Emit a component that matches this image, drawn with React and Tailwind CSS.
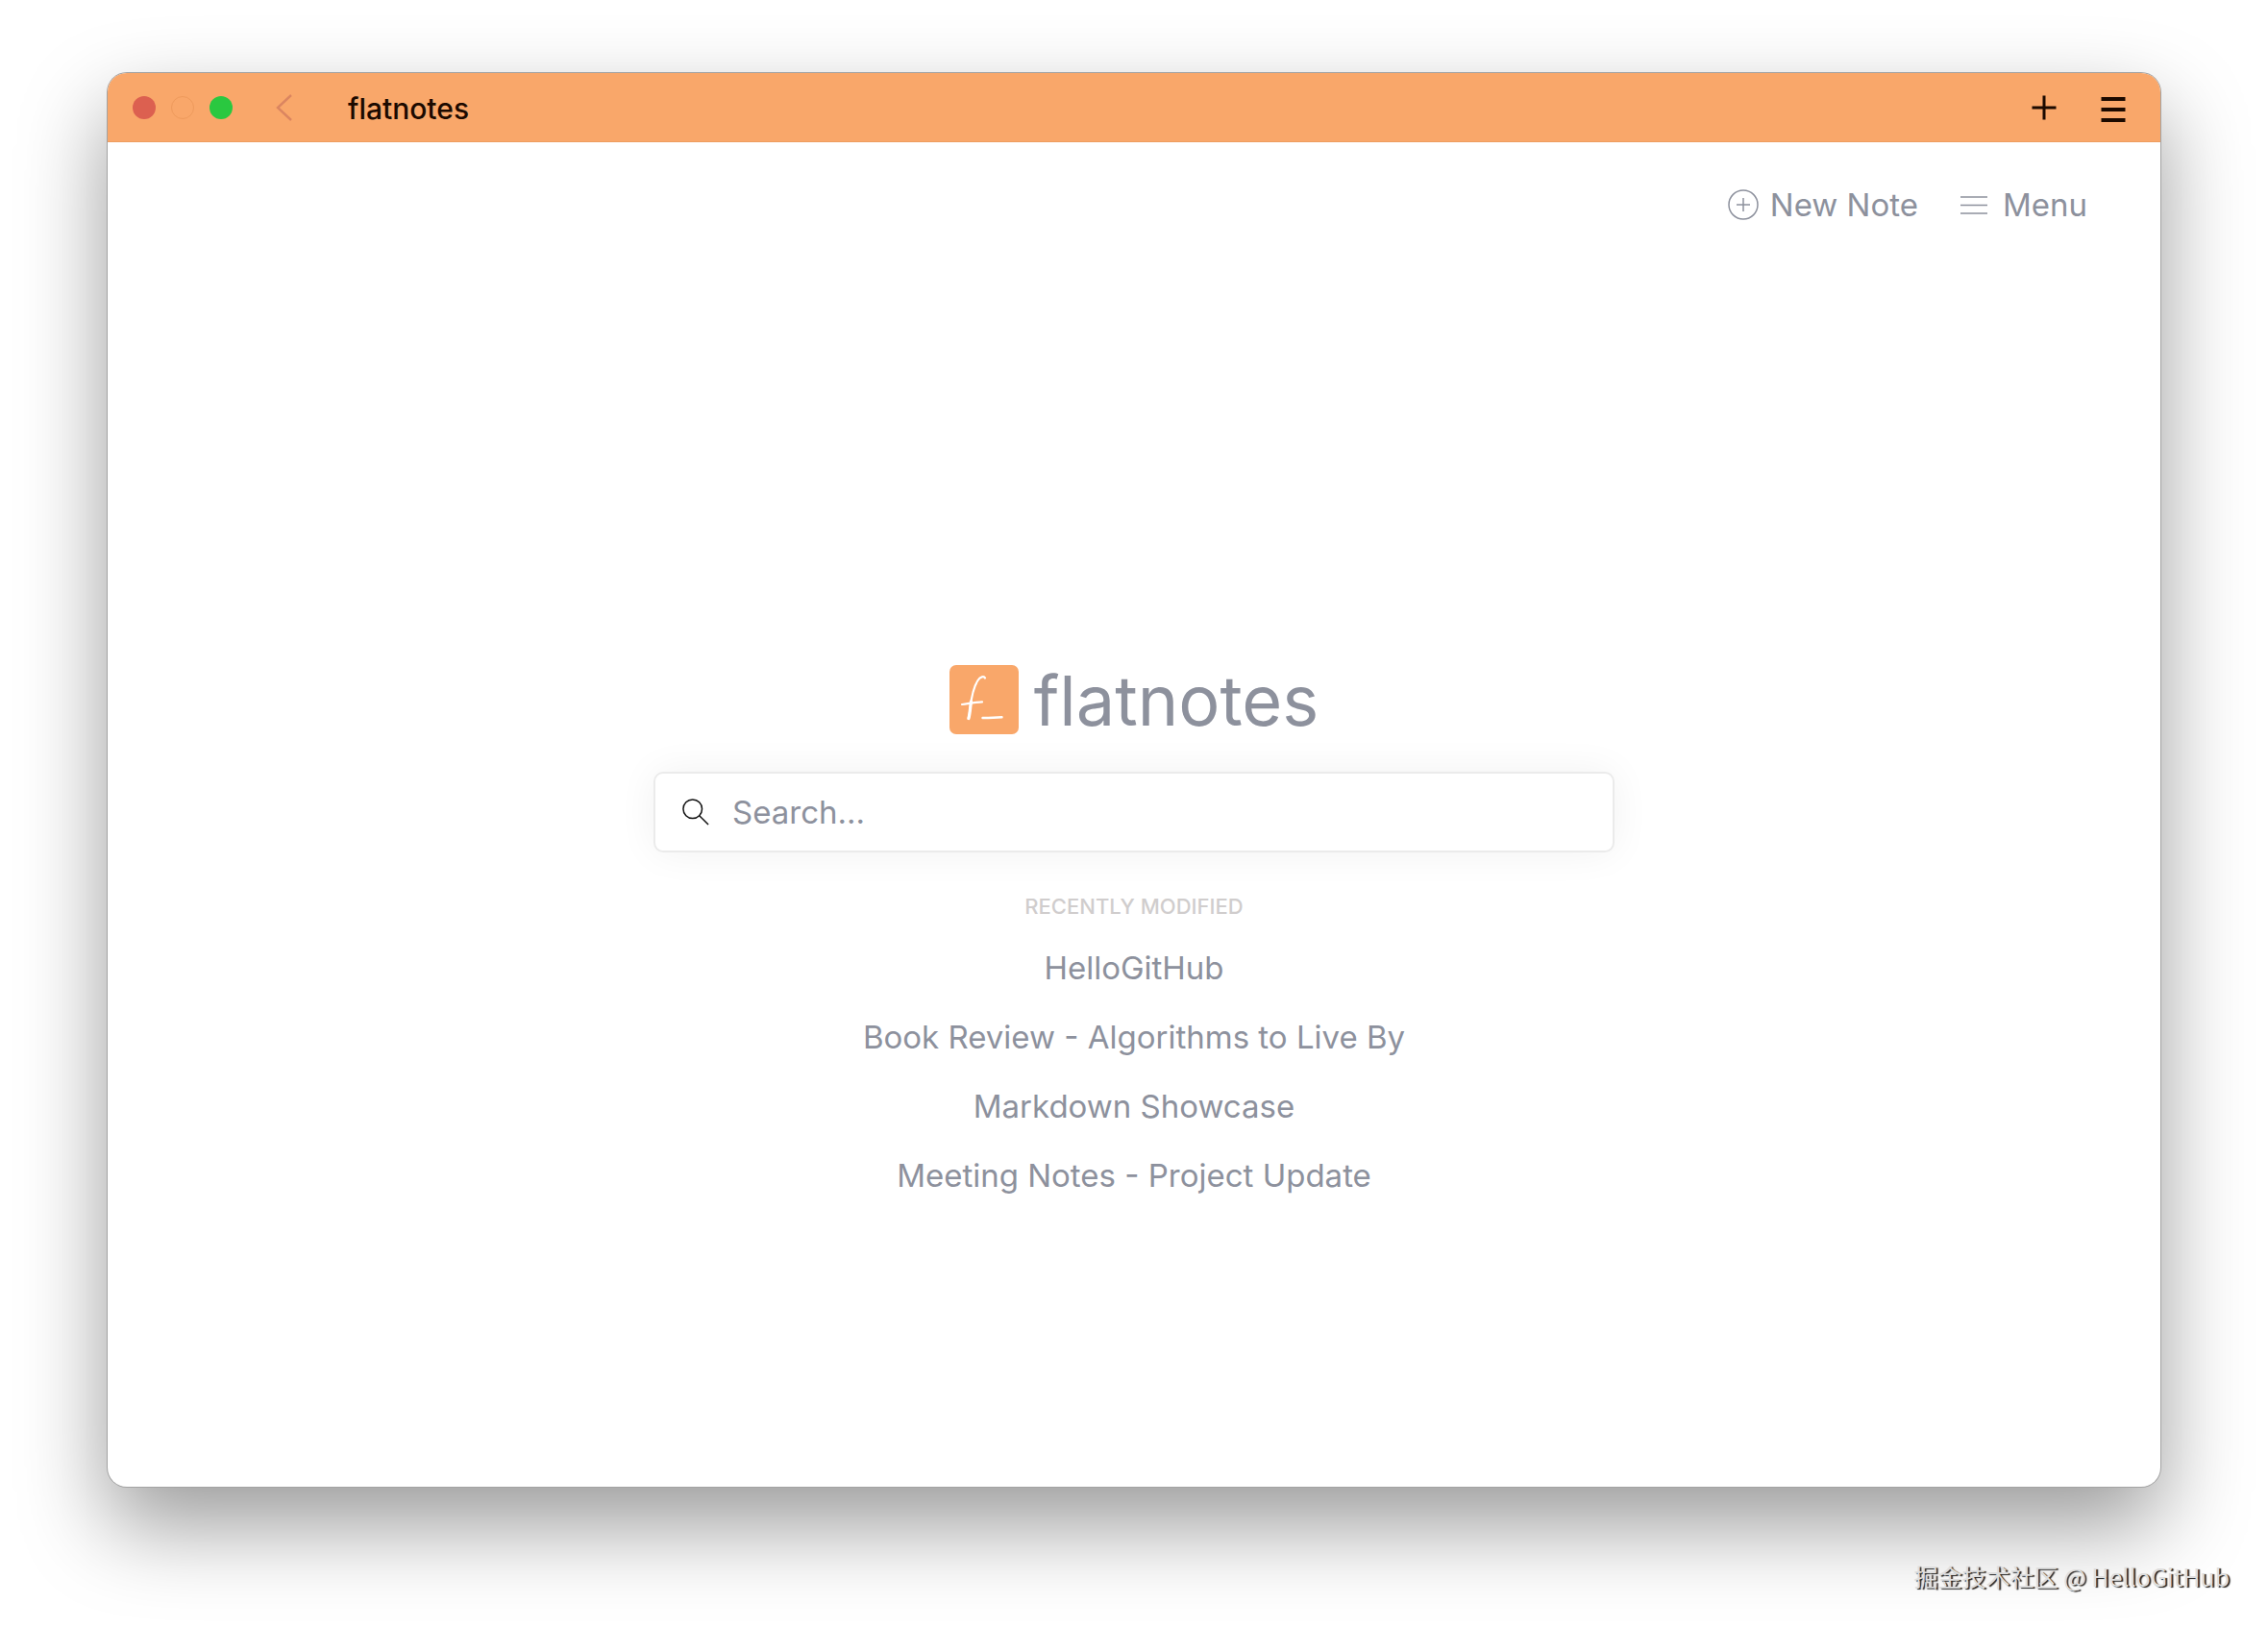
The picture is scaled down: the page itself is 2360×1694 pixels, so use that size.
import React, { useState } from 'react';

const notes = [
    'HelloGitHub',
    'Book Review - Algorithms to Live By',
    'Markdown Showcase',
    'Meeting Notes - Project Update',
];

const TitleBar = () => (
    <header className="flex h-[72px] items-center border-b border-[#ee9d60] bg-[#f9a76a] pr-9 pl-[26px]">
        <div className="flex gap-4">
            <button aria-label="Close" className="h-6 w-6 rounded-full bg-[#dc6050]" />
            <button aria-label="Minimize" className="h-6 w-6 rounded-full border border-[#ee9a5c]" />
            <button aria-label="Zoom" className="h-6 w-6 rounded-full bg-[#2ac840]" />
        </div>
        <button aria-label="Back" className="ml-11">
            <svg className="h-7 w-5" viewBox="0 0 20 28" fill="none" stroke="#db8560" strokeWidth="2.4">
                <path d="M17 1 3 14l14 13" />
            </svg>
        </button>
        <span className="ml-14 pt-0.5 text-[30px] leading-9 font-medium text-[#1c0a00]">flatnotes</span>
        <div className="ml-auto flex items-center gap-[46px]">
            <button aria-label="Add">
                <svg className="h-[26px] w-[26px]" viewBox="0 0 26 26" fill="none" stroke="#1c0a00" strokeWidth="3">
                    <path d="M.5 13h25M13 .5v25" />
                </svg>
            </button>
            <button aria-label="More">
                <svg className="mt-1 h-[26px] w-[26px]" viewBox="0 0 26 26" fill="none" stroke="#1c0a00" strokeWidth="4">
                    <path d="M.5 2h25M.5 13h25M.5 24h25" />
                </svg>
            </button>
        </div>
    </header>
);

const Logo = () => (
    <div className="flex items-center gap-4">
        <svg className="h-[72px] w-[72px]" viewBox="0 0 72 72" fill="none">
            <rect width="72" height="72" rx="7" fill="#f9a76a" />
            <g stroke="#fff" strokeLinecap="round" strokeLinejoin="round">
                <path d="M37 13.5c-1-2.2-5-1.7-7.5 2.5C25 23 22.5 36 21.5 45c-.4 4-.8 7-1.8 11" strokeWidth="2.2" />
                <path d="M22.5 38c-1 6-1 12-2.6 17.5" strokeWidth="3.2" />
                <path d="M13 41c6-.6 14-2.5 21-2.6" strokeWidth="2.2" />
                <path d="M34.5 55c6 .2 13-.6 20-.7" strokeWidth="2.4" />
            </g>
        </svg>
        <h1 className="pt-0.5 text-[72px] leading-[72px]">flatnotes</h1>
    </div>
);

const App = () => {
    const [searchTerm, setSearchTerm] = useState('');

    return (
        <div className="flex min-h-screen flex-col bg-white px-28 pt-[76px] font-['Inter',sans-serif] text-[#8d919d]">
            <div className="flex flex-1 flex-col overflow-hidden rounded-[20px] bg-white shadow-[0_0_0_1px_#a3a3a3,0_40px_90px_rgba(0,0,0,0.4)]">
                <TitleBar />
                <nav className="flex h-[130px] items-center justify-end gap-11 pr-[76px] text-[33px] leading-10">
                    <button className="flex items-center gap-3">
                        <svg className="h-8 w-8" viewBox="0 0 32 32" fill="none" stroke="currentColor" strokeWidth="1.5">
                            <circle cx="16" cy="16" r="15" />
                            <path d="M9 16h14M16 9v14" />
                        </svg>
                        New Note
                    </button>
                    <button className="flex items-center gap-4">
                        <svg className="h-8 w-7" viewBox="0 0 28 32" fill="none" stroke="currentColor" strokeWidth="1.5">
                            <path d="M0 8h28M0 16.5h28M0 25h28" />
                        </svg>
                        Menu
                    </button>
                </nav>
                <main className="flex flex-col items-center pt-[413px]">
                    <Logo />
                    <label className="mt-[38px] flex h-[84px] w-full max-w-[1000px] items-center gap-6 rounded-[10px] border-2 border-[#ebebeb] bg-white px-7 shadow-[0_0_40px_rgba(0,0,0,0.06)]">
                        <svg className="h-7 w-7 shrink-0" viewBox="0 0 30 30" fill="none" stroke="#111" strokeWidth="1.6">
                            <circle cx="11.5" cy="11.5" r="10.5" />
                            <path d="m19 19 10 10" />
                        </svg>
                        <input
                            type="text"
                            aria-label="Search"
                            placeholder="Search..."
                            value={searchTerm}
                            onChange={(e) => setSearchTerm(e.target.value)}
                            className="h-full w-full text-[33px] outline-none placeholder:text-[#8d919d]"
                        />
                    </label>
                    <h2 className="mt-9 text-[22px] leading-10 font-medium text-[#d0cdcd]">RECENTLY MODIFIED</h2>
                    <ul className="mt-2 text-center text-[33px] leading-[72px]">
                        {notes.map((note) => (
                            <li key={note}>
                                <a href="#">{note}</a>
                            </li>
                        ))}
                    </ul>
                </main>
            </div>
            <footer className="-mr-[72px] h-[147px] pt-[73px] text-right font-['Noto_Sans_CJK_SC',sans-serif] text-[25px] leading-10 text-[#dedede] [text-shadow:2px_1px_1px_#222]">
                掘金技术社区 @ HelloGitHub
            </footer>
        </div>
    );
};

export default App;
